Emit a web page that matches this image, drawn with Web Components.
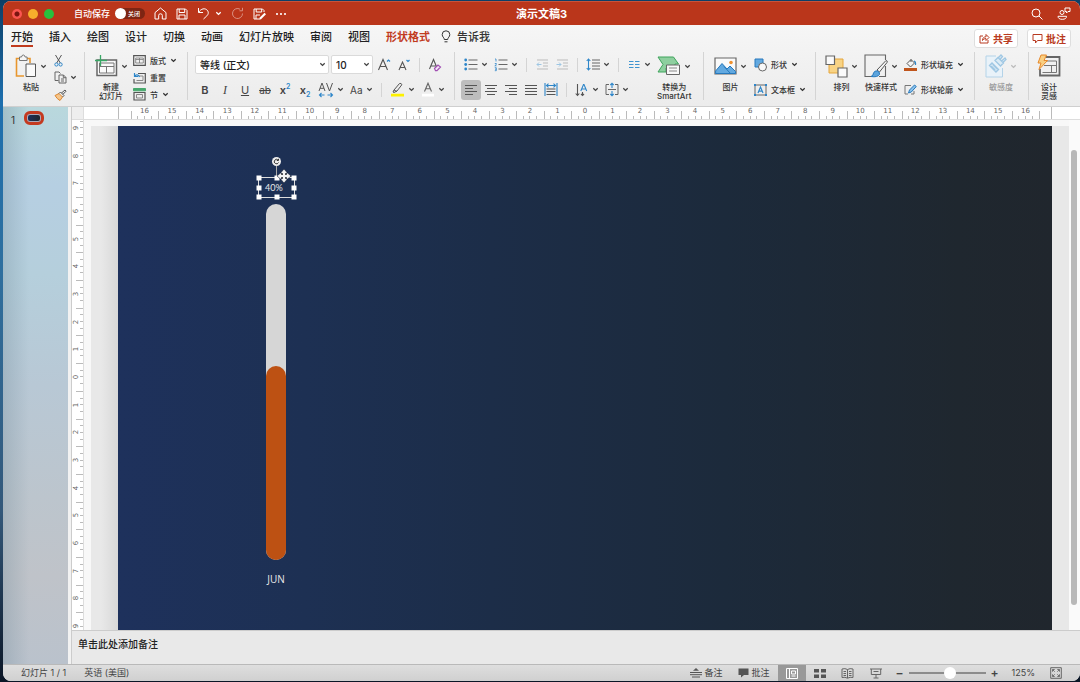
<!DOCTYPE html>
<html lang="zh-CN">
<head>
<meta charset="utf-8">
<title>演示文稿3</title>
<style>
html,body{margin:0;height:100%}
body{background:linear-gradient(180deg,#0d3f66 0,#1d6fae 15%,#2f6f9e 40%,#33587a 75%,#0b1626 100%);font-family:Inter,"Noto Sans CJK SC",sans-serif;color:#2b2b2b;overflow:hidden}
</style>
</head>
<body>
<slide-app></slide-app>
<script>
const ICONS={
chev:[7,5,'<path d="M1.3 1.2 3.5 3.4 5.7 1.2" fill="none" stroke="currentColor" stroke-width="1.3"/>'],
home:[13,13,'<path d="M1 5.6 6.5 1 12 5.6V12H8.3V8.3Q8.3 6.8 6.5 6.8T4.700 8.300V12H1Z"/>'],
save:[12,12,'<path d="M1 1h8.500l1.500 1.500V11H1ZM3.200 1v3.500h5.500V1M3 11V7h6v4"/>'],
undo:[13,13,'<path d="M1.500 1v4.500H6M1.700 5.300C4 1.500 8 .8 10.200 3.200c2 2.300 1 4.600-1 6.300L6.500 12"/>'],
redo:[13,13,'<path d="M11.500 6.500A5 5 0 1 1 9 2.200M11.500 .8v3H8.500"/>'],
saveedit:[13,12,'<path d="M6 11H1V1h8.500L11 2.500V4M3.200 1v3h5.500V1M3 11V7h4"/><path d="M6.500 9.800 11.500 4.800 13 6.300 8 11.300 6 11.800Z" fill="currentColor" stroke="none"/>'],
dots:[12,4,'<g fill="currentColor" stroke="none"><circle cx="2" cy="2" r="1.100"/><circle cx="6" cy="2" r="1.100"/><circle cx="10" cy="2" r="1.100"/></g>'],
search:[12,12,'<circle cx="5" cy="5" r="4"/><path d="M8 8 11.500 11.500"/>'],
people:[14,13,'<circle cx="5" cy="5.500" r="2"/><path d="M1 9.300h8.500q0 3-4.200 3T1 9.300ZM8 1h5v3.500h-2L9.500 6V4.500H8Z"/>'],
bulb:[10,13,'<path d="M3.300 9.500C3.300 7.500 1.200 7 1.200 4.600a3.800 3.800 0 0 1 7.600 0C8.800 7 6.700 7.500 6.700 9.500ZM3.500 11.800h3"/>'],
share:[11,11,'<path d="M4 3H1v7h8V7M3.500 7.500C3.500 4.800 5 3.800 7 3.800V1.500l3 3-3 3V5.600C5.500 5.600 4.500 6 3.500 7.500Z"/>'],
comment:[11,11,'<path d="M1 1.500h9v6H5.500l-2 2.500V7.500H1Z"/>'],
paste:[22,24,'<path d="M4 4.500H1.500v17.500H9M15 9V4.500h-3" stroke="#e8962e" stroke-width="1.600"/><path d="M4.500 3h2q.3-2 1.800-2t1.800 2h2v3.500H4.500Z" fill="#f5f5f5" stroke="#777"/><path d="M11 10h9.500v12.500H11Z" fill="#fafafa" stroke="#555"/>'],
cut:[9,13,'<path d="M1.500 1 6.300 9M7.500 1 2.700 9" stroke="#555"/><circle cx="2.400" cy="10.500" r="1.600" stroke="#2e86c9"/><circle cx="6.600" cy="10.500" r="1.600" stroke="#2e86c9"/>'],
copy:[13,13,'<path d="M4.500 9.500H1V1h4l1.500 1.500M5 4h4.500L12 6.500V12H5ZM9.300 4v2.700H12M7 8h3M7 10h3" stroke="#666"/>'],
brush:[13,12,'<path d="M1 6.500 5 4.500 8.500 8 6 11.500Q3 10 1 6.500Z" fill="#f5c58a" stroke="#dd8730"/><path d="M5 4.500 6.500 3 10 6.500 8.500 8M7.500 4 11 1l1 1.200L9 5.300" stroke="#555"/>'],
newslide:[24,22,'<path d="M3 5v15.500h19.500V5Z" fill="#fafafa" stroke="#666" stroke-width="1.500"/><path d="M5.500 8h14.500v10H5.500ZM5.500 11.500H20M12.500 11.500V18" stroke="#777"/><path d="M1 5.500h12M6.500 0v11" stroke="#38a765" stroke-width="1.300"/>'],
layout:[13,11,'<path d="M.7.700h11.600v9.600H.7Z" stroke="#555" stroke-width="1.200"/><path d="M2.700 3h7.600v5H2.700ZM6.500 3v5M2.700 4.500h7.600" stroke="#777" stroke-width=".8"/>'],
reset:[13,12,'<path d="M5 1.500h7.300v9.500H1V7" stroke="#555" stroke-width="1.200"/><path d="M6 4h4v4.500H3.500" stroke="#888"/><path d="M1.500 1v3.500H5M1.600 4.300C3 2.300 5.500 2.500 6.500 5" stroke="#2e86c9" stroke-width="1.200"/>'],
section:[13,13,'<path d="M.5.500h12v2.300H.5Z" fill="#47a86c" stroke="#47a86c"/><path d="M1 4.500h11V12H1Z" stroke="#555" stroke-width="1.200"/><path d="M3.500 6.500h6V10h-6Z" stroke="#888"/>'],
Aup:[14,13,'<path d="M1.500 12 6 1.500 10.500 12M3 8.500h6" stroke="#555" stroke-width="1.100"/><path d="M10 3.500l1.500-1.500L13 3.500" stroke="#2e86c9" stroke-width="1.200"/>'],
Adn:[14,13,'<path d="M2 12 5.500 4 9 12M3 9.500h5" stroke="#555" stroke-width="1.100"/><path d="M9.500 2l1.500 1.500L12.500 2" stroke="#2e86c9" stroke-width="1.200"/>'],
clear:[14,14,'<path d="M1.500 11 5.500 1.500 9.500 11M2.800 8h5" stroke="#555" stroke-width="1.100"/><path d="M6.500 10.500 10 7l2.500 2L9 12.700H7.500Z" fill="#f3e3f6" stroke="#a14fb2" stroke-width="1.200"/>'],
hl:[15,15,'<path d="M4 8 9.500 1.500q2-.7 2.300 1.300L7 9 4 10.500 3 10Z" stroke="#555"/><path d="M4 8 7 9.500" stroke="#555"/><path d="M1 13.200h13" stroke="#fdf100" stroke-width="2.800"/>'],
fc:[14,15,'<path d="M3.500 9.500 7 1.200 10.500 9.500M4.700 6.800h4.700" stroke="#666" stroke-width="1.100"/><path d="M1 13.200h12" stroke="#fff" stroke-width="2.800"/>'],
av:[16,16,'<path d="M1 9 4 1l3 8M2.100 6.300h3.800M8.500 1l3 8 3-8" stroke="#555"/><path d="M1.500 13h5M9.500 13h5M3.500 11l-2 2 2 2M12.500 11l2 2-2 2" stroke="#2e86c9" stroke-width="1.100"/>'],
bullets:[14,13,'<path d="M4.500 2h9M4.500 6.500h9M4.500 11h9" stroke="#666"/><g fill="#2e86c9" stroke="none"><circle cx="1.700" cy="2" r="1.400"/><circle cx="1.700" cy="6.500" r="1.400"/><circle cx="1.700" cy="11" r="1.400"/></g>'],
numbers:[14,13,'<path d="M4.500 2h9M4.500 6.500h9M4.500 11h9" stroke="#666"/><path d="M1 1h1v2.500M.8 5.500h1.500v1L.8 7.800h1.700M.8 9.700h1.500v3H.8M1 11.200h1.300" stroke="#2e86c9" stroke-width=".8"/>'],
outdent:[13,11,'<path d="M1 1h11M7 4h5M7 7h5M1 10h11" stroke="#bbb"/><path d="M1 5.500h4.500M3 3.500l-2 2 2 2" stroke="#9cc6e4"/>'],
indent:[13,11,'<path d="M1 1h11M7 4h5M7 7h5M1 10h11" stroke="#bbb"/><path d="M.5 5.500H5M3 3.500l2 2-2 2" stroke="#9cc6e4"/>'],
spacing:[14,13,'<path d="M6 2h8M6 5h8M6 8h8M6 11h8" stroke="#666"/><path d="M2.500 1v11M.7 3l1.800-2 1.800 2M.7 10l1.800 2 1.800-2" stroke="#2e86c9" stroke-width="1.100"/>'],
columns:[14,9,'<path d="M2 1.500h4.500M2 4.500h4.500M2 7.500h4.500M8 1.500h4.500M8 4.500h4.500M8 7.500h4.500" stroke="#3d93d0" stroke-width="1.100"/>'],
al:[12,12,'<path d="M0 1.500h12M0 4.500h8M0 7.500h12M0 10.500h8" stroke="#555"/>'],
ac:[12,12,'<path d="M0 1.500h12M2 4.500h8M0 7.500h12M2 10.500h8" stroke="#555"/>'],
ar:[12,12,'<path d="M0 1.500h12M4 4.500h8M0 7.500h12M4 10.500h8" stroke="#555"/>'],
aj:[12,12,'<path d="M0 1.500h12M0 4.500h12M0 7.500h12M0 10.500h12" stroke="#555"/>'],
ad:[14,13,'<path d="M1 0v13M13 0v13M2.500 2.500h9M4.500.700l-2 1.800 2 1.800M9.500.700l2 1.800-2 1.800" stroke="#2e86c9" stroke-width="1.100"/><path d="M2.500 6h9M2.500 8.500h9M2.500 11.500h9" stroke="#555"/>'],
tdir:[14,14,'<path d="M2.500 1v11.500M.7 10.500l1.800 2 1.800-2M7.500 9v3.500M6 11l1.500 1.500L9 11" stroke="#555" stroke-width="1.100"/><path d="M5.800 8 8.500 1.500h.5L11.700 8M6.800 6h4" stroke="#2e86c9" stroke-width="1.100"/>'],
valign:[14,13,'<path d="M4 1.500H1v10h3M10 1.500h3v10h-3M3 6.500h8" stroke="#666"/><path d="M7 0v5M7 8v5M5.300 2 7 .3 8.700 2M5.300 11 7 12.700 8.700 11" stroke="#2e86c9" stroke-width="1.100"/>'],
smart:[24,20,'<path d="M1 1h15.500l5 7H18v4H9v4H1l5-7.500Z" fill="#8ecf9f" stroke="#3fa45c"/><path d="M9.500 9h13v9.500h-13Z" fill="#f8f8f8" stroke="#666"/><path d="M12 12h8M12 15h8" stroke="#888"/>'],
picture:[23,18,'<path d="M1 1h21v16H1Z" fill="#fafafa" stroke="#666" stroke-width="1.200"/><path d="M1.600 14 8 6.500l5 5.500 3-3 5.500 5.500v2H1.600Z" fill="#62a9e0" stroke="#2679bd"/><path d="M10 9.500l6.500 7" stroke="#2679bd"/><circle cx="17" cy="5.500" r="1.800" fill="#ef9130" stroke="none"/>'],
shapes:[13,14,'<path d="M1 1h8v8H1Z" fill="#62a9e0" stroke="#2679bd"/><circle cx="8.500" cy="9" r="4" fill="#f8f8f8" stroke="#666"/>'],
textbox:[13,12,'<path d="M1 1h11v10H1Z" stroke="#666"/><path d="M4 9 6.500 3 9 9M5 7.200h3" stroke="#2e86c9" stroke-width="1.200"/><path d="M0 0h2v2H0ZM11 0h2v2h-2ZM0 10h2v2H0ZM11 10h2v2h-2Z" fill="#2e86c9" stroke="none"/>'],
arrange:[23,23,'<path d="M4 4h14v14H4Z" fill="#f8d384" stroke="#e5a63c"/><path d="M1 1h8.500v8.500H1ZM13 13h9v9h-9Z" fill="#fafafa" stroke="#666" stroke-width="1.200"/>'],
quick:[24,24,'<path d="M21.500 6V1H1v21.500h8M15 22.500h6.500V12" stroke="#666" stroke-width="1.100"/><path d="M13 16 22 6.500q2 .3 1 2L15.500 18Z" fill="#f4f4f4" stroke="#555"/><path d="M7 22.500q2.500-1 2.500-3.500 1.500-3 4-2t2 3.500q-2 3-8.500 2Z" fill="#5ba4dd" stroke="#2679bd"/>'],
fill:[13,13,'<path d="M3 5.500 7 1.500l3.500 3.500L6.500 9Z" fill="#f4f4f4" stroke="#555"/><path d="M7 1.500V4" stroke="#555"/><path d="M10 3q2 .500 1.500 4" stroke="#2e86c9" stroke-width="1.200"/><path d="M0 11.500h13" stroke="#c0551c" stroke-width="3"/>'],
outline:[13,12,'<path d="M7 1.500H1V10h3M10 7v3H7" stroke="#777"/><path d="M4.500 9 5.500 6 10.500 1l1.800 1.500L7.300 8Z" fill="#8cc2ea" stroke="#2679bd"/>'],
sens:[22,24,'<path d="M11 2H1v21h16.500V14" fill="#e9f2f9" stroke="#b4d3e8"/><path d="M4.500 11.500l2.500-2.500 6.500 6.500-2.500 2.500ZM6.500 12.500l3.500 3.500M8.500 11l3.500 3.500" fill="#cfe3f1" stroke="#9fc7e3" stroke-width="1.400"/><path d="M10 6.500l3-3 5.500 5.500-3 3ZM13 4l3-3 1.500 1.500-2.500 3M16.500 7l3.500-3 1 1.500-3 3" fill="#dcebf5" stroke="#9fc7e3" stroke-width="1.300"/>'],
design:[24,22,'<path d="M9 2h13.500v18.500H3V14" stroke="#666" stroke-width="1.800"/><path d="M9 6h10.500V17.500H5.500M7 10.500h12.500M14.500 10.500V17.500" stroke="#777"/><path d="M4 0h5.500L7 5.500h3.500L2 14.500l2-6.500H1Z" fill="#f9cf82" stroke="#e8892b"/>'],
notes:[12,10,'<path d="M0 4.500h12M0 6.700h12M2 9h8" stroke="#555"/><path d="M6 0 9 2.700H3Z" fill="#555" stroke="none"/>'],
commentf:[11,10,'<path d="M.5.500h10v6.500H6L3 9.500V7H.5Z" fill="#555" stroke="none"/>'],
normal:[12,11,'<path d="M.5.500h11v10H.5ZM3.500.500v10M5.500 3h4v3h-4ZM5.500 8h4" stroke="#fff"/>'],
sorter:[12,9,'<path d="M0 0h5v3.500H0ZM7 0h5v3.500H7ZM0 5.500h5V9H0ZM7 5.500h5V9H7Z" fill="#555" stroke="none"/>'],
reading:[13,11,'<path d="M6.500 1.500Q4 0 1 1v8.500q3-.7 5.500.7 2.500-1.400 5.500-.7V1Q9 0 6.500 1.500ZM6.500 1.500V10M2.500 3.500h2.500M2.500 5.500h2.500M2.500 7.500h2.500M8 3.500h2.500M8 5.500h2.500M8 7.500h2.500" stroke="#666"/>'],
show:[12,11,'<path d="M0 1h12M1.300 1v5.500h9.400V1M3.500 3.500h5M6 6.500V10M3.500 10h5" stroke="#666"/>'],
fit:[12,12,'<path d="M.7.700h10.600v10.600H.7Z" stroke="#666"/><path d="M2.500 4.700V2.500h2.200M7.300 2.500h2.200v2.200M9.500 7.300v2.200H7.300M4.700 9.500H2.500V7.300M2.700 2.700l2 2M9.300 2.700l-2 2M9.300 9.300l-2-2M2.700 9.300l2-2" stroke="#666" stroke-width=".9"/>'],
move:[14,14,'<path d="M7 0 10 3.500 8.500 5.500 10.500 4 14 7 10.500 10 8.500 8.500 10 10.500 7 14 4 10.500 5.500 8.500 3.500 10 0 7 3.500 4 5.500 5.500 4 3.500Z" fill="#f4f4f4" stroke="#1a2236" stroke-width=".6"/><path d="M5.500 4.200v1.300H4.200M8.500 4.200v1.300h1.300M5.500 9.800V8.500H4.200M8.500 9.800V8.500h1.300" stroke="#333" stroke-width=".9"/>']
};
function define(name,html,setup){
  const t=document.createElement('template');t.innerHTML=html;
  customElements.define(name,class extends HTMLElement{
    connectedCallback(){
      if(this.shadowRoot)return;
      const r=this.attachShadow({mode:'open'});
      r.append(t.content.cloneNode(true));
      if(setup)setup(this,r);
    }
  });
}
const RESET='button,select,input{font:inherit;color:inherit;margin:0;padding:0;border:0;background:none}button{cursor:pointer}';

define('ui-icon','<style>:host{display:inline-flex;flex:none}svg{display:block;overflow:visible}</style>',(el,r)=>{
  const [w,h,s]=ICONS[el.getAttribute('name')];
  r.innerHTML+=`<svg width="${w}" height="${h}" viewBox="0 0 ${w} ${h}" fill="none" stroke="currentColor" aria-hidden="true">${s}</svg>`;
});

/* Row-shaped command: icon or letter, optional label, optional menu arrow */
define('tool-button',`<style>${RESET}
:host{display:flex}
button{display:flex;align-items:center;justify-content:center;gap:3px;padding:0 3px;height:20px;font-size:10px;line-height:12px;color:#444;white-space:nowrap}
:host([square]) button{width:20px;padding:0}
:host([labelled]) button{font-size:8px;gap:4px;padding:0;height:16px;color:#333;font-weight:500}
:host([pressed]) button{background:#bdbdbd;border-radius:3px}
</style><button type="button"><slot></slot></button>`,(el,r)=>{
  const b=r.querySelector('button');
  if(el.title)b.setAttribute('aria-label',el.title);
  if(el.hasAttribute('icon'))b.insertAdjacentHTML('afterbegin',`<ui-icon name="${el.getAttribute('icon')}"></ui-icon>`);
  if(el.hasAttribute('menu'))b.insertAdjacentHTML('beforeend','<ui-icon name="chev"></ui-icon>');
});

/* Large command: icon above a caption of one or two lines */
define('big-button',`<style>${RESET}
:host{display:flex;align-items:flex-start}
button{display:flex;flex-direction:column;align-items:center;gap:4px;padding-top:1px;font-size:8px;line-height:9px;color:#333;font-weight:500;text-align:center;white-space:pre}
.top{display:flex;align-items:center;gap:3px;height:26px;color:#444}
:host([disabled]) button{color:#999}
:host([disabled]) .top{color:#bbb}
</style><button type="button"><span class="top"></span><span><slot></slot></span></button>`,(el,r)=>{
  r.querySelector('.top').innerHTML=`<ui-icon name="${el.getAttribute('icon')}"></ui-icon>`+(el.hasAttribute('menu')?'<ui-icon name="chev"></ui-icon>':'');
  if(el.hasAttribute('disabled'))r.querySelector('button').disabled=true;
});

define('drop-down',`<style>${RESET}
:host{display:flex;position:relative}
select{appearance:none;width:100%;height:19px;box-sizing:border-box;padding:0 14px 0 4px;border:1px solid #dadada;border-radius:2px;background:#fff;font-size:10px;font-weight:500;font-family:inherit;color:#222}
ui-icon{position:absolute;right:3px;top:7px;pointer-events:none}
</style><select></select><ui-icon name="chev"></ui-icon>`,(el,r)=>{
  const s=r.querySelector('select');s.setAttribute('aria-label',el.getAttribute('label'));
  s.innerHTML=`<option>${el.getAttribute('value')}</option>`;
});

define('ribbon-group',`<style>
:host{display:flex;align-items:flex-start;height:48px;border-right:1px solid #d4d4d4;min-width:0}
:host(:last-child){border:0}
</style><slot></slot>`);

define('tool-rows',`<style>
:host{display:flex;flex-direction:column}
::slotted(div){display:flex;align-items:center;height:25px}
:host([three]) ::slotted(div){height:17px}
</style><slot></slot>`);

define('title-bar',`<style>${RESET}
:host{display:grid;grid-template-columns:1fr auto 1fr;align-items:center;height:24px;background:#ba361b;color:#fff;font-size:9px;border-top:1px solid #c9533a;box-sizing:border-box}
.left,.right,.lights,.tools{display:flex;align-items:center}
.left{padding-left:9px}
.lights{gap:6px}.lights button{width:10px;height:10px;border-radius:50%;background:#f7ae2c}
.lights button:first-child{background:radial-gradient(circle,#7a1410 0 2px,#fb5550 3px)}.lights button:last-child{background:#27c13d}
.auto{display:flex;align-items:center;gap:5px;margin-left:20px;font-weight:500}
.pill{display:flex;align-items:center;gap:2px;width:30px;height:11px;border-radius:6px;background:#7d2513;font-size:6px}
.pill input{appearance:none;width:11px;height:11px;border-radius:50%;background:#fff}
.tools{gap:9px;margin-left:9px}
.tools button,.right button{display:flex}
.undo{gap:5px;align-items:center}
.dim{opacity:.45}
h1{margin:0;font-size:11px;line-height:14px;font-weight:700}
.right{justify-content:flex-end;gap:14px;padding-right:9px}
</style>
<div class="left"><div class="lights"><button aria-label="关闭窗口"></button><button aria-label="最小化"></button><button aria-label="全屏"></button></div>
<label class="auto">自动保存<span class="pill"><input type="checkbox" role="switch">关闭</span></label>
<div class="tools"><button aria-label="主页"><ui-icon name="home"></ui-icon></button><button aria-label="保存"><ui-icon name="save"></ui-icon></button><button class="undo" aria-label="撤消"><ui-icon name="undo"></ui-icon><ui-icon name="chev"></ui-icon></button><button class="dim" aria-label="重做"><ui-icon name="redo"></ui-icon></button><button aria-label="另存"><ui-icon name="saveedit"></ui-icon></button><button aria-label="更多"><ui-icon name="dots"></ui-icon></button></div></div>
<h1>演示文稿3</h1>
<div class="right"><button aria-label="搜索"><ui-icon name="search"></ui-icon></button><button aria-label="协作"><ui-icon name="people"></ui-icon></button></div>`);

define('tab-bar',`<style>${RESET}
:host{display:flex;justify-content:space-between;align-items:center;height:23px;padding:0 9px 0 8px;font-size:11px;font-weight:500;color:#222}
nav,.side{display:flex}
nav{gap:16px}.side{gap:9px;padding-top:3px}
nav button{display:flex;gap:6px;align-items:center;height:21px;line-height:16px;font-weight:500;white-space:nowrap;box-sizing:border-box;border-top:2px solid transparent;border-bottom:2px solid transparent}
.on{border-bottom-color:#c13b1e}
.ctx{color:#c13b1e;font-weight:700}
nav button:last-child{margin-left:-5px;color:#333}
.side button{display:flex;align-items:center;gap:3px;height:19px;padding:0 4px;background:#fff;border:1px solid #dedede;border-radius:3px;color:#b93a20;font-size:10px;font-weight:700}
</style>
<nav><button class="on">开始</button><button>插入</button><button>绘图</button><button>设计</button><button>切换</button><button>动画</button><button>幻灯片放映</button><button>审阅</button><button>视图</button><button class="ctx">形状格式</button><button><ui-icon name="bulb"></ui-icon>告诉我</button></nav>
<div class="side"><button><ui-icon name="share"></ui-icon>共享</button><button><ui-icon name="comment"></ui-icon>批注</button></div>`);

define('main-ribbon',`<style>
:host{display:grid;grid-template-columns:82fr 103fr 267fr 249fr 112fr 159fr 54fr 51fr;padding:4px 0;height:50px;color:#444}
i.sep{width:1px;height:14px;margin:0 5px;background:#d4d4d4}
.g1{padding-left:12px;gap:4px}.g2{padding-left:9px;gap:5px}.g3{padding-left:7px}.g4{padding-left:6px;gap:3px}
.g5{padding-left:10px;gap:7px}.g6{padding-left:9px;gap:6px}.g7{padding-left:10px}.g8{padding-left:8px}
.font{width:134px;margin-right:2px}.size{width:42px;margin-right:1px}
b{font-size:11px;font-weight:600}em,u,s{font-size:11px}em{font-family:"Liberation Serif",serif;font-size:12px}s{font-size:10px}
sup,sub{font-size:7px;line-height:0;color:#2e86c9;font-weight:600}
</style>
<ribbon-group class="g1"><big-button icon="paste" menu>粘贴</big-button>
<tool-rows three><div><tool-button icon="cut" title="剪切"></tool-button></div><div><tool-button icon="copy" menu title="复制"></tool-button></div><div><tool-button icon="brush" title="格式刷"></tool-button></div></tool-rows></ribbon-group>
<ribbon-group class="g2"><big-button icon="newslide" menu>新建
幻灯片</big-button>
<tool-rows three><div><tool-button labelled icon="layout" menu>版式</tool-button></div><div><tool-button labelled icon="reset">重置</tool-button></div><div><tool-button labelled icon="section" menu>节</tool-button></div></tool-rows></ribbon-group>
<ribbon-group class="g3"><tool-rows>
<div><drop-down class="font" label="字体" value="等线 (正文)"></drop-down><drop-down class="size" label="字号" value="10"></drop-down><tool-button square icon="Aup" title="增大字号"></tool-button><tool-button square icon="Adn" title="减小字号"></tool-button><i class="sep"></i><tool-button square icon="clear" title="清除格式"></tool-button></div>
<div><tool-button square><b>B</b></tool-button><tool-button square><em>I</em></tool-button><tool-button square><u>U</u></tool-button><tool-button square><s>ab</s></tool-button><tool-button square><b>x<sup>2</sup></b></tool-button><tool-button square><b>x<sub>2</sub></b></tool-button><tool-button icon="av" menu title="字符间距"></tool-button><tool-button menu>Aa</tool-button><i class="sep"></i><tool-button icon="hl" menu title="突出显示"></tool-button><tool-button icon="fc" menu title="字体颜色"></tool-button></div>
</tool-rows></ribbon-group>
<ribbon-group class="g4"><tool-rows>
<div><tool-button icon="bullets" menu title="项目符号"></tool-button><tool-button icon="numbers" menu title="编号"></tool-button><i class="sep"></i><tool-button square icon="outdent" title="减少缩进"></tool-button><tool-button square icon="indent" title="增加缩进"></tool-button><i class="sep"></i><tool-button icon="spacing" menu title="行距"></tool-button><i class="sep"></i><tool-button icon="columns" menu title="分栏"></tool-button></div>
<div><tool-button square pressed icon="al" title="左对齐"></tool-button><tool-button square icon="ac" title="居中"></tool-button><tool-button square icon="ar" title="右对齐"></tool-button><tool-button square icon="aj" title="两端对齐"></tool-button><tool-button square icon="ad" title="分散对齐"></tool-button><i class="sep"></i><tool-button icon="tdir" menu title="文字方向"></tool-button><tool-button icon="valign" menu title="对齐文本"></tool-button></div>
</tool-rows><big-button icon="smart" menu>转换为
SmartArt</big-button></ribbon-group>
<ribbon-group class="g5"><big-button icon="picture" menu>图片</big-button><tool-rows><div><tool-button labelled icon="shapes" menu>形状</tool-button></div><div><tool-button labelled icon="textbox" menu>文本框</tool-button></div></tool-rows></ribbon-group>
<ribbon-group class="g6"><big-button icon="arrange" menu>排列</big-button><big-button icon="quick" menu>快速样式</big-button><tool-rows><div><tool-button labelled icon="fill" menu>形状填充</tool-button></div><div><tool-button labelled icon="outline" menu>形状轮廓</tool-button></div></tool-rows></ribbon-group>
<ribbon-group class="g7"><big-button icon="sens" menu disabled>敏感度</big-button></ribbon-group>
<ribbon-group class="g8"><big-button icon="design">设计
灵感</big-button></ribbon-group>`);

define('h-ruler',`<style>
:host{display:block;background:#fff;padding:0 28px 0 34px;border-bottom:1px solid #ddd}
.r{display:grid;grid-template-columns:12fr repeat(33,28fr) 12fr;height:12px;border:solid #bbb;border-width:0 1px}
span{font:7px/9px "DejaVu Sans",sans-serif;text-align:center;color:#666;
background:linear-gradient(#bbb,#bbb) 0 100%/1px 8px,linear-gradient(#bbb,#bbb) 25% 100%/1px 3px,linear-gradient(#bbb,#bbb) 50% 100%/1px 3px,linear-gradient(#bbb,#bbb) 75% 100%/1px 3px;background-repeat:no-repeat}
i:last-child{border-left:1px solid #bbb;height:8px;align-self:end}
</style><div class="r"><i></i></div>`,(el,r)=>{
  const d=r.querySelector('.r');
  for(let n=-16;n<=16;n++)d.insertAdjacentHTML('beforeend',`<span>${Math.abs(n)}</span>`);
  d.insertAdjacentHTML('beforeend','<i></i>');
});

define('v-ruler',`<style>
:host{display:block;background:#fff;overflow:hidden;padding-top:4px;border-right:1px solid #ddd;box-sizing:border-box}
.r{display:grid;grid-template-rows:repeat(19,1fr);height:calc(100% + 20px);margin-top:-10px}
div div{display:flex;align-items:center;font:7px/8px "DejaVu Sans",sans-serif;color:#666;
background:linear-gradient(#bbb,#bbb) 100% 0/7px 1px,linear-gradient(#bbb,#bbb) 100% 25%/3px 1px,linear-gradient(#bbb,#bbb) 100% 50%/3px 1px,linear-gradient(#bbb,#bbb) 100% 75%/3px 1px;background-repeat:no-repeat}
span{width:8px;text-align:center;transform:rotate(-90deg)}
</style><div class="r"></div>`,(el,r)=>{
  const d=r.querySelector('.r');
  for(let n=-9;n<=9;n++)d.insertAdjacentHTML('beforeend',`<div><span>${Math.abs(n)}</span></div>`);
});

define('slide-canvas',`<style>
:host{display:block;position:relative;background:linear-gradient(90deg,#1e315c 0,#1d3053 20%,#1c2d48 40%,#1c2a3b 65%,#1f272f 90%,#20262d 100%);color:#e8e8e8;overflow:hidden}
.track,.fill,.sel,.handle,.rot,.stem,.name,.cursor{position:absolute}
.track{left:148px;top:78px;width:20px;height:356px;border-radius:10px;background:#d6d6d6}
.fill{left:0;right:0;bottom:0;height:194px;border-radius:10px;background:#bd5113}
.name{left:140px;top:446px;width:36px;text-align:center;font:10px/14px "Open Sans",sans-serif}
.sel{left:140px;top:51px;width:35px;height:19px;border:1px solid #ddd}
.sel p{margin:0;padding-left:6px;font:9px/20px Lato,sans-serif}
.handle{width:5px;height:5px;background:#fff;transform:translate(-50%,-50%)}
.stem{left:158px;top:40px;width:1px;height:11px;background:#aaa}
.rot{left:154px;top:31px;width:9px;height:9px;border-radius:50%;background:#eee;color:#333;display:flex}
.cursor{left:159px;top:43px}
</style>
<div class="track"><div class="fill"></div></div><div class="name">JUN</div>
<div class="stem"></div><div class="rot"><svg width="9" height="9" fill="none" stroke="currentColor"><path d="M6.500 5.500A2.200 2.200 0 1 1 6 3M6.500 1.800V3.500H4.800"/></svg></div>
<div class="sel"><p>40%</p></div><ui-icon class="cursor" name="move"></ui-icon>`,(el,r)=>{
  const s=r.querySelector('.sel');
  for(const y of [0,50,100])for(const x of [0,50,100])if(x!==50||y!==50)s.insertAdjacentHTML('beforeend',`<i class="handle" style="left:${x}%;top:${y}%"></i>`);
});

define('slide-panel',`<style>
:host{display:flex;align-items:flex-start;gap:9px;padding:4px 0 0 8px;background:linear-gradient(90deg,#6d87964d,transparent 40%),linear-gradient(180deg,#b9d8dd 0,#b6cfe2 14%,#b5cfdc 30%,#b8c8d5 50%,#bcc5cd 70%,#bfc3c9 84%,#bac2cc 100%);font-size:10px;line-height:18px;color:#333}
button{width:20px;height:14px;padding:1px;border:3px solid #c43a20;border-radius:6px;background:linear-gradient(90deg,#1e315c,#20262d) content-box,#aab;box-sizing:border-box}
</style><span>1</span><button aria-label="幻灯片 1"></button>`);

define('status-bar',`<style>${RESET}
:host{display:flex;justify-content:space-between;height:16px;padding:0 18px;border-top:1px solid #b9b9b9;background:linear-gradient(#dedede,#d0d0d0);font-size:9px;line-height:16px;color:#444}
div{display:flex;align-items:center}
.l{gap:18px}
button{display:flex;align-items:center;justify-content:center;height:16px;gap:3px}
.txt{margin-right:15px}.view{width:28px}.txt+.view{margin-left:-7px}
.on{background:#999}
.z{font-size:12px;line-height:14px;width:10px;font-weight:600}
.view+.z{margin-left:5px}
input{appearance:none;width:77px;height:12px;margin:0 4px;background:linear-gradient(#8c8c8c,#8c8c8c) center/100% 2px no-repeat}
input::-webkit-slider-thumb{appearance:none;width:12px;height:12px;border-radius:50%;background:#fff}
output{margin:0 15px 0 12px}
</style>
<div class="l"><span>幻灯片 1 / 1</span><span>英语 (美国)</span></div>
<div><button class="txt"><ui-icon name="notes"></ui-icon>备注</button><button class="txt"><ui-icon name="commentf"></ui-icon>批注</button><button class="view on" aria-label="普通"><ui-icon name="normal"></ui-icon></button><button class="view" aria-label="浏览"><ui-icon name="sorter"></ui-icon></button><button class="view" aria-label="阅读"><ui-icon name="reading"></ui-icon></button><button class="view" aria-label="放映"><ui-icon name="show"></ui-icon></button><button class="z" aria-label="缩小">−</button><input type="range" min="0" max="100" value="54" aria-label="缩放"><button class="z" aria-label="放大">+</button><output>125%</output><button aria-label="适应窗口"><ui-icon name="fit"></ui-icon></button></div>`);

define('slide-app',`<style>
:host{display:flex;flex-direction:column;height:calc(100vh - 1px);margin-left:3px;padding-top:1px;box-sizing:border-box}
.win{display:flex;flex-direction:column;flex:1;min-height:0;border-radius:8px;overflow:hidden;background:#e9e9e9}
.bar{background:linear-gradient(#f6f6f6,#ececec);border-bottom:1px solid #cfcfcf}
.work{flex:1;min-height:0;display:grid;grid-template-columns:65px 4px 1fr}
.split{background:#f2f2f2;border-right:1px solid #ccc}
.edit{display:grid;grid-template-columns:12px 1fr 11px;grid-template-rows:13px 1fr 34px;min-height:0;min-width:0}
.corner{background:#eee;border:solid #ddd;border-width:0 1px 1px 0}
h-ruler{grid-column:2/4}
.stage{display:flex;min-height:0;background:#f8f8f8;padding:6px 0 0 7px}
.board{display:flex;flex:1;padding:0 17px 0 27px;background:linear-gradient(90deg,#e8e8e8 0 10px,#d8d8d8 27px,#e8e8e8 60px)}
slide-canvas{flex:1}
.scroll{background:#fafafa;padding:30px 3px 25px 2px;display:flex}
.scroll i{flex:1;border-radius:3px;background:#b8b8b8}
.notes{grid-column:1/4;box-sizing:border-box;width:100%;height:100%;border:0;border-top:1px solid #ccc;margin:0;padding:6px 6px;background:#e9e9e9;font:500 10px/14px Inter,"Noto Sans CJK SC",sans-serif;color:#222;resize:none;display:block}
</style>
<div class="win"><title-bar></title-bar><div class="bar"><tab-bar></tab-bar><main-ribbon></main-ribbon></div>
<div class="work"><slide-panel></slide-panel><div class="split"></div>
<div class="edit"><div class="corner"></div><h-ruler></h-ruler><v-ruler></v-ruler><div class="stage"><div class="board"><slide-canvas></slide-canvas></div></div><div class="scroll"><i></i></div><textarea class="notes" aria-label="备注">单击此处添加备注</textarea></div></div>
<status-bar></status-bar></div>`);
</script>
</body>
</html>
